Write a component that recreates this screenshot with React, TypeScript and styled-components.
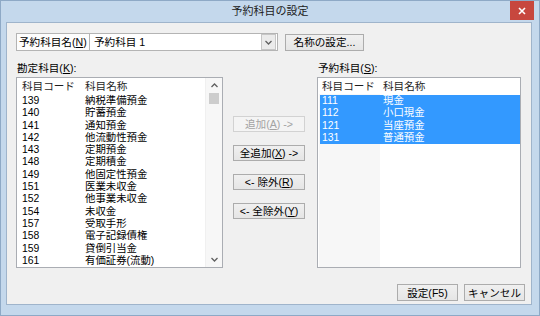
import React from 'react';
import styled, { createGlobalStyle } from 'styled-components';

const GlobalStyle = createGlobalStyle`
  html, body {
    margin: 0;
    padding: 0;
    background: #c4d8ec;
  }
  body {
    font-family: "Liberation Sans", "Noto Sans CJK JP", sans-serif;
    font-size: 10.6px;
    color: #000;
    white-space: nowrap;
  }
  u {
    text-underline-offset: 1px;
  }
`;

const Window = styled.div`
  width: 540px;
  height: 316px;
  box-sizing: border-box;
  background: #c4d8ec;
  border: 1px solid #8ea9c6;
  display: flex;
  flex-direction: column;
`;

const TitleBar = styled.div`
  height: 21px;
  display: grid;
  grid-template-columns: 1fr auto 1fr;
  align-items: start;
`;

const Title = styled.div`
  grid-column: 2;
  line-height: 21px;
  font-size: 11px;
  color: #202020;
`;

const CloseButton = styled.div`
  grid-column: 3;
  justify-self: end;
  width: 24px;
  height: 19px;
  margin-right: 5px;
  background: #c7473e;
  display: flex;
  align-items: center;
  justify-content: center;
`;

const Client = styled.div`
  flex: 1;
  margin: 0 7px 10px 5px;
  border: 1px solid #9fb4cb;
  background: #f0f0f0;
  padding: 10px 7px 0 9px;
  display: flex;
  flex-direction: column;
`;

const TopRow = styled.div`
  display: flex;
  align-items: center;
  gap: 7px;
  height: 18px;
`;

const ComboGroup = styled.div`
  display: flex;
`;

const FieldLabel = styled.div`
  width: 70px;
  height: 16px;
  border: 1px solid #b4b4b4;
  background: #fdfdfd;
  padding-left: 2px;
  line-height: 16px;
  box-sizing: content-box;
  overflow: hidden;
`;

const Combo = styled.div`
  width: 183px;
  height: 16px;
  border: 1px solid #b4b4b4;
  border-left: none;
  background: #fff;
  display: flex;
  align-items: center;
  justify-content: space-between;
  padding-left: 4px;
  line-height: 16px;
`;

const DropButton = styled.div`
  width: 13px;
  height: 14px;
  margin-right: 1px;
  border: 1px solid #c6c6c6;
  background: #ebebeb;
  display: flex;
  align-items: center;
  justify-content: center;
`;

const Button = styled.div<{ $width: number; $height?: number; $disabled?: boolean }>`
  width: ${(p) => p.$width}px;
  height: ${(p) => p.$height ?? 16}px;
  box-sizing: border-box;
  border: 1px solid ${(p) => (p.$disabled ? '#d2d2d2' : '#acacac')};
  background: ${(p) =>
    p.$disabled ? '#f4f4f4' : 'linear-gradient(#f0f0f0, #e5e5e5)'};
  color: ${(p) => (p.$disabled ? '#a3a3a3' : '#000')};
  display: flex;
  align-items: center;
  justify-content: center;
  line-height: 14px;
`;

const Panels = styled.div`
  display: grid;
  grid-template-columns: 207px 72px 206px;
  column-gap: 10px;
  margin-top: 10px;
`;

const PanelColumn = styled.div<{ $offset?: number }>`
  display: flex;
  flex-direction: column;
  margin-left: ${(p) => p.$offset ?? 0}px;
`;

const Caption = styled.div`
  line-height: 14px;
  height: 14px;
  margin-bottom: 2px;
  padding-left: 1px;
`;

const ListBox = styled.div`
  height: 191px;
  box-sizing: border-box;
  border: 1px solid #aaadb3;
  background: #fff;
  display: flex;
  overflow: hidden;
`;

const ListContent = styled.div<{ $shade: number }>`
  flex: 1;
  display: flex;
  flex-direction: column;
  overflow: hidden;
  background: ${(p) =>
    p.$shade
      ? `linear-gradient(to right, #fff 0 1px, #f7f7f7 1px ${p.$shade}px, #fff ${p.$shade}px)`
      : '#fff'};
`;

const Header = styled.div<{ $codeWidth: number; $indent: number }>`
  display: grid;
  grid-template-columns: ${(p) => p.$codeWidth}px 1fr;
  height: 16px;
  line-height: 16px;
  padding-left: ${(p) => p.$indent}px;
  background: #fff;
  color: #1e1e1e;
  margin-bottom: 1px;
  flex-shrink: 0;
`;

const Row = styled.div<{ $codeWidth: number; $indent: number; $selected?: boolean }>`
  display: grid;
  grid-template-columns: ${(p) => p.$codeWidth}px 1fr;
  height: 12.3px;
  line-height: 12.3px;
  flex-shrink: 0;
  font-size: 10.4px;
  padding-left: ${(p) => p.$indent}px;
  margin-left: ${(p) => (p.$selected ? 2 : 0)}px;
  background: ${(p) => (p.$selected ? '#3399ff' : 'transparent')};
  color: ${(p) => (p.$selected ? '#fff' : '#000')};
`;

const ScrollBar = styled.div`
  width: 16px;
  background: #f7f7f7;
  border-left: 1px solid #f0f0f0;
  display: flex;
  flex-direction: column;
`;

const ScrollArrow = styled.div`
  height: 15px;
  display: flex;
  align-items: center;
  justify-content: center;
`;

const ScrollTrack = styled.div`
  flex: 1;
  padding: 0 3px;
`;

const Thumb = styled.div`
  height: 11px;
  background: #cdcdcd;
`;

const MiddleColumn = styled.div`
  display: flex;
  flex-direction: column;
  gap: 13px;
  padding-top: 55px;
`;

const Footer = styled.div`
  display: flex;
  justify-content: flex-end;
  gap: 6px;
  margin-top: 16px;
  margin-right: -1px;
`;

const Chevron = ({ up }: { up?: boolean }) => (
  <svg width="7" height="5" viewBox="0 0 7 5">
    <polyline
      points={up ? '0.5,4 3.5,1 6.5,4' : '0.5,1 3.5,4 6.5,1'}
      fill="none"
      stroke="#606060"
      strokeWidth="1.3"
    />
  </svg>
);

const accounts: [string, string][] = [
  ['139', '納税準備預金'],
  ['140', '貯蓄預金'],
  ['141', '通知預金'],
  ['142', '他流動性預金'],
  ['143', '定期預金'],
  ['148', '定期積金'],
  ['149', '他固定性預金'],
  ['151', '医業未収金'],
  ['152', '他事業未収金'],
  ['154', '未収金'],
  ['157', '受取手形'],
  ['158', '電子記録債権'],
  ['159', '貸倒引当金'],
  ['161', '有価証券(流動)'],
];

const reserved: [string, string][] = [
  ['111', '現金'],
  ['112', '小口現金'],
  ['121', '当座預金'],
  ['131', '普通預金'],
];

const App: React.FC = () => {
  return (
    <>
      <GlobalStyle />
      <Window>
        <TitleBar>
          <Title>予約科目の設定</Title>
          <CloseButton>
            <svg width="8" height="8" viewBox="0 0 8 8">
              <path d="M1 1 L7 7 M7 1 L1 7" stroke="#fff" strokeWidth="1.6" />
            </svg>
          </CloseButton>
        </TitleBar>
        <Client>
          <TopRow>
            <ComboGroup>
              <FieldLabel>
                予約科目名(<u>N</u>)
              </FieldLabel>
              <Combo>
                <span>予約科目 1</span>
                <DropButton>
                  <Chevron />
                </DropButton>
              </Combo>
            </ComboGroup>
            <Button $width={79} $height={17}>
              名称の設定...
            </Button>
          </TopRow>

          <Panels>
            <PanelColumn>
              <Caption>
                勘定科目(<u>K</u>):
              </Caption>
              <ListBox>
                <ListContent $shade={0}>
                  <Header $codeWidth={63} $indent={5}>
                    <span>科目コード</span>
                    <span>科目名称</span>
                  </Header>
                  {accounts.map(([code, name]) => (
                    <Row key={code} $codeWidth={63} $indent={5}>
                      <span>{code}</span>
                      <span>{name}</span>
                    </Row>
                  ))}
                </ListContent>
                <ScrollBar>
                  <ScrollArrow>
                    <Chevron up />
                  </ScrollArrow>
                  <ScrollTrack>
                    <Thumb />
                  </ScrollTrack>
                  <ScrollArrow>
                    <Chevron />
                  </ScrollArrow>
                </ScrollBar>
              </ListBox>
            </PanelColumn>

            <MiddleColumn>
              <Button $width={72} $disabled>
                追加(<u>A</u>) -&gt;
              </Button>
              <Button $width={72}>
                全追加(<u>X</u>) -&gt;
              </Button>
              <Button $width={72}>
                &lt;- 除外(<u>R</u>)
              </Button>
              <Button $width={72}>
                &lt;- 全除外(<u>Y</u>)
              </Button>
            </MiddleColumn>

            <PanelColumn $offset={2}>
              <Caption>
                予約科目(<u>S</u>):
              </Caption>
              <ListBox>
                <ListContent $shade={62}>
                  <Header $codeWidth={61} $indent={4}>
                    <span>科目コード</span>
                    <span>科目名称</span>
                  </Header>
                  {reserved.map(([code, name]) => (
                    <Row key={code} $codeWidth={61} $indent={2} $selected>
                      <span>{code}</span>
                      <span>{name}</span>
                    </Row>
                  ))}
                </ListContent>
              </ListBox>
            </PanelColumn>
          </Panels>

          <Footer>
            <Button $width={61} $height={17}>
              設定(F5)
            </Button>
            <Button $width={61} $height={17}>
              キャンセル
            </Button>
          </Footer>
        </Client>
      </Window>
    </>
  );
};

export default App;
